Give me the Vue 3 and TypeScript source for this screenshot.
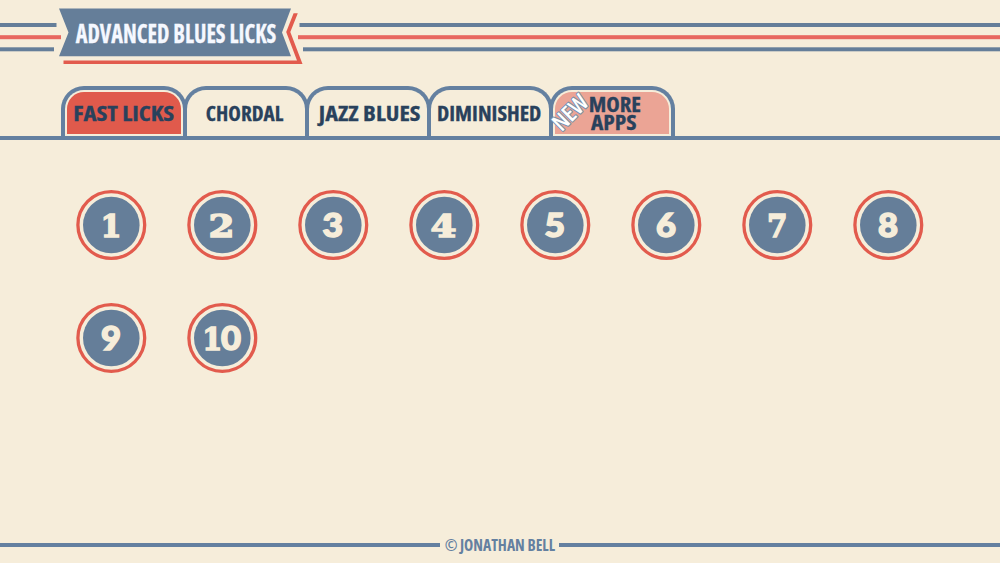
<script setup lang="ts">
interface Line { text: string; x: number; y: number; w: number }
interface Tab { id: string; fill?: string; lines: Line[]; isNew?: boolean }
interface Glyph { ch: string; x: number; w: number; face: string }

const tabs: Tab[] = [
  { id: 'fast', fill: 'red', lines: [{ text: 'FAST LICKS', x: 8.2, y: 31.2, w: 101 }] },
  { id: 'chordal', lines: [{ text: 'CHORDAL', x: 18.8, y: 31.2, w: 77.6 }] },
  { id: 'jazz', lines: [{ text: 'JAZZ BLUES', x: 9.8, y: 31.2, w: 101.6 }] },
  { id: 'diminished', lines: [{ text: 'DIMINISHED', x: 6, y: 31.2, w: 104.4 }] },
  {
    id: 'more', fill: 'pink', isNew: true,
    lines: [
      { text: 'MORE', x: 35.7, y: 22, w: 52.3 },
      { text: 'APPS', x: 38, y: 39.7, w: 45.5 },
    ],
  },
]

const licks: Glyph[][] = [
  [{ ch: '1', x: 24.4, w: 21, face: 'serif' }],
  [{ ch: '2', x: 21.5, w: 26, face: 'serif' }],
  [{ ch: '3', x: 24.5, w: 20.5, face: 'sans' }],
  [{ ch: '4', x: 21.5, w: 26, face: 'serif' }],
  [{ ch: '5', x: 24.5, w: 20.5, face: 'sans' }],
  [{ ch: '6', x: 25, w: 20, face: 'sans' }],
  [{ ch: '7', x: 25, w: 20.5, face: 'serif' }],
  [{ ch: '8', x: 25, w: 20, face: 'sans' }],
  [{ ch: '9', x: 25, w: 20, face: 'sans' }],
  [
    { ch: '1', x: 15.2, w: 20, face: 'serif' },
    { ch: '0', x: 34, w: 20, face: 'sans' },
  ],
]
</script>

<template>
  <main class="app">
    <header class="header">
      <svg class="art" width="1000" height="70" viewBox="0 0 1000 70">
        <g class="blue">
          <rect x="0" y="23" width="56.5" height="4" />
          <rect x="0" y="47.3" width="54" height="4" />
          <rect x="299.5" y="23" width="700.5" height="4" />
          <rect x="303" y="47.3" width="697" height="4" />
        </g>
        <g class="coral">
          <rect x="0" y="35.2" width="61" height="4" />
          <rect x="298" y="35.2" width="702" height="4" />
        </g>
        <path class="blue" d="M59 8.5H291L282 32.5L291 56.3H59L68.5 32.5Z" />
        <path class="red" d="M293.6 13.3H297.8L290.3 32L302.5 64H63.5V60.5H297L286.2 32Z" />
        <text class="label title" x="75.8" y="42.6" textLength="200.4" lengthAdjust="spacingAndGlyphs">ADVANCED BLUES LICKS</text>
      </svg>
    </header>

    <nav class="tabs">
      <button v-for="tab in tabs" :key="tab.id" class="tab">
        <span v-if="tab.fill" class="fill" :class="tab.fill"></span>
        <svg class="art tab-art" width="118" height="46">
          <text
            v-for="line in tab.lines" :key="line.text" class="label tab-label"
            :x="line.x" :y="line.y" :textLength="line.w" lengthAdjust="spacingAndGlyphs"
          >{{ line.text }}</text>
          <text
            v-if="tab.isNew" class="label new" x="-20" y="8.5" textLength="40"
            lengthAdjust="spacingAndGlyphs" transform="translate(16.8 22.2) rotate(-45)"
          >NEW</text>
        </svg>
      </button>
    </nav>

    <section class="grid">
      <button v-for="(glyphs, i) in licks" :key="i" class="lick">
        <svg class="art" width="70" height="70" viewBox="0 0 70 70">
          <circle class="ring" cx="35.3" cy="35" r="33.4" />
          <circle class="blue" cx="35.3" cy="35" r="28.3" />
          <text
            v-for="g in glyphs" :key="g.ch" class="digit" :class="g.face" :x="g.x" y="47.4"
            :textLength="g.w" lengthAdjust="spacingAndGlyphs"
          >{{ g.ch }}</text>
        </svg>
      </button>
    </section>

    <footer class="footer">
      <span class="rule left"></span>
      <svg class="art" width="119" height="20">
        <text class="label copy mark" x="4.7" y="12.8" textLength="12.8" lengthAdjust="spacingAndGlyphs">©</text>
        <text class="label copy" x="20" y="12.8" textLength="95" lengthAdjust="spacingAndGlyphs">JONATHAN BELL</text>
      </svg>
      <span class="rule"></span>
    </footer>
  </main>
</template>

<style>
body { margin: 0; background: #f6edda; }
</style>

<style scoped>
.app {
  width: 1000px;
  height: 563px;
  overflow: hidden;
  display: flex;
  flex-direction: column;
  background: #f6edda;
  font-family: "Open Sans", "Noto Sans", sans-serif;
}
.art { display: block; overflow: visible; flex: none; }
.header { height: 86px; flex: none; }
.blue { fill: #657e99; }
.coral { fill: #e8675f; }
path.red { fill: #e25b4d; }
.label {
  font-family: "Open Sans", "Noto Sans", sans-serif;
  font-weight: 700;
  font-stretch: 75%;
}
.title { font-size: 26.3px; fill: #f5f8ff; stroke: #f5f8ff; stroke-width: 0.3px; }

.tabs {
  display: flex;
  height: 50px;
  flex: none;
  padding-left: 60.6px;
  border-bottom: 4px solid #6480a0;
}
button { padding: 0; margin: 0; background: none; border: 0; cursor: pointer; }
.tab {
  box-sizing: border-box;
  flex: none;
  display: grid;
  width: 126px;
  height: 50px;
  margin-right: -3.9px;
  border: 4px solid #6480a0;
  border-bottom: 0;
  border-radius: 23px 23px 0 0;
}
.fill, .tab-art { grid-area: 1 / 1; }
.fill { margin: 1.7px 2px 2.3px; border-radius: 17px 17px 0 0; }
.fill.red { background: #e05a4c; }
.fill.pink { background: #eba495; }
.tab-label { font-size: 22px; fill: #29415c; stroke: #29415c; stroke-width: 0.3px; }
.new {
  font-size: 23px;
  font-weight: 600;
  fill: #fff;
  stroke: #7890aa;
  stroke-width: 2px;
  paint-order: stroke;
  stroke-linejoin: round;
}

.grid {
  flex: 1;
  display: grid;
  align-content: start;
  grid-template-columns: repeat(8, 70px);
  grid-auto-rows: 70px;
  gap: 43px 41px;
  padding: 50px 0 0 76px;
}
.lick { width: 70px; height: 70px; }
.ring { fill: none; stroke: #e25b4d; stroke-width: 3.3px; }
.digit { fill: #f6edda; stroke: #f6edda; stroke-width: 1.5px; }
.digit.sans { font-family: Lato, sans-serif; font-weight: 900; font-size: 33px; }
.digit.serif { font-family: "DejaVu Serif", serif; font-weight: 700; font-size: 32.5px; }

.footer { display: flex; height: 25px; flex: none; }
.rule { flex: 1; height: 4px; margin-top: 5.3px; background: #6480a0; }
.rule.left { flex: 0 0 440px; }
.copy { font-size: 15.3px; fill: #6480a0; }
.mark { font-weight: 600; }
</style>
